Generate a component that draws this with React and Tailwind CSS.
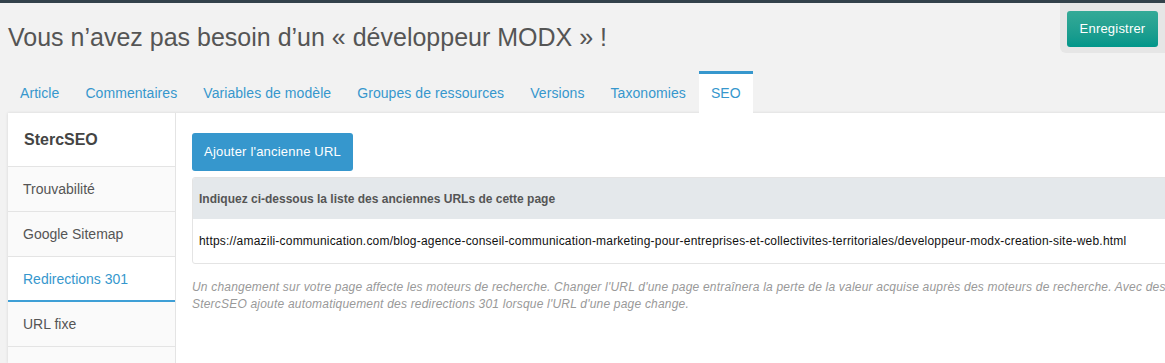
// MODX resource editor, SEO tab with the StercSEO "Redirections 301" panel open.

const tabs = ['Article', 'Commentaires', 'Variables de modèle', 'Groupes de ressources', 'Versions', 'Taxonomies', 'SEO'];
const sideItems = ['Trouvabilité', 'Google Sitemap', 'Redirections 301', 'URL fixe', ''];

export default function App() {
    return (
        <div className="w-[1165px] h-[363px] overflow-hidden bg-[#f2f2f2] font-['Liberation_Sans',Arial,sans-serif]">
            <div className="h-[3px] bg-[#33424b]" />

            {/* Title + save button */}
            <div className="flex justify-between h-[68px]">
                <h1 className="ml-[8px] mt-[19px] text-[25px] leading-[30px] text-[#555] whitespace-nowrap">
                    Vous n’avez pas besoin d’un « développeur MODX » !
                </h1>
                <div className="w-[105px] h-[50px] bg-[#e6e6e6] rounded-bl-[6px] pl-[7px] pt-[8px]">
                    <button className="w-[91px] h-[36px] rounded-[3px] bg-gradient-to-b from-[#34aa97] to-[#00968a] text-white text-[13px] tracking-[0.2px]">
                        Enregistrer
                    </button>
                </div>
            </div>

            {/* Tabs */}
            <div className="flex pl-[7px] h-[42px]">
                {tabs.map((t) => (
                    <div
                        key={t}
                        className={`h-[42px] flex items-center border-t-[3px] text-[14px] tracking-[0.07px] text-[#3697cd] whitespace-nowrap ${
                            t === 'SEO' ? 'bg-white border-t-[#3697cd] px-[12px]' : 'border-t-transparent px-[13px]'
                        }`}
                    >
                        {t}
                    </div>
                ))}
            </div>

            {/* Panel */}
            <div className="flex ml-[8px] w-[1200px] h-[250px] bg-white shadow-[0_0_3px_rgba(0,0,0,0.12)]">
                <div className="w-[168px] shrink-0 border-r border-[#e4e4e4]">
                    <div className="h-[54px] pl-[16px] flex items-center border-b border-[#e4e4e4] text-[16px] font-bold text-[#444]">
                        StercSEO
                    </div>
                    {sideItems.map((s, i) => {
                        const active = s === 'Redirections 301';
                        return (
                            <div
                                key={i}
                                className={`h-[45px] pl-[15px] flex items-center text-[14px] ${
                                    active
                                        ? 'bg-white text-[#3697cd] border-b-2 border-[#3e9fd6] pt-[1px]'
                                        : 'bg-[#fafafa] text-[#555] border-b border-[#e4e4e4]'
                                }`}
                            >
                                {s}
                            </div>
                        );
                    })}
                </div>

                <div className="flex-1 pl-[16px] pt-[20px]">
                    <button className="w-[161px] h-[38px] rounded-[3px] bg-[#3697cd] text-white text-[13px] tracking-[0.2px]">
                        Ajouter l'ancienne URL
                    </button>
                    <div className="mt-[6px] border border-[#e4e4e4] rounded-[3px] overflow-hidden">
                        <div className="h-[41px] bg-[#e4e8eb] pl-[6px] flex items-center text-[12px] font-bold text-[#555]">
                            Indiquez ci-dessous la liste des anciennes URLs de cette page
                        </div>
                        <div className="h-[44px] pl-[6px] flex items-center text-[12px] tracking-[0.2px] text-[#111] whitespace-nowrap">
                            https://amazili-communication.com/blog-agence-conseil-communication-marketing-pour-entreprises-et-collectivites-territoriales/developpeur-modx-creation-site-web.html
                        </div>
                    </div>
                    <p className="mt-[15px] text-[12px] leading-[17px] tracking-[0.2px] italic text-[#999] whitespace-nowrap">
                        Un changement sur votre page affecte les moteurs de recherche. Changer l'URL d'une page entraînera la perte de la valeur acquise auprès des moteurs de recherche. Avec des
                        <br />
                        StercSEO ajoute automatiquement des redirections 301 lorsque l'URL d'une page change.
                    </p>
                </div>
            </div>
        </div>
    );
}
